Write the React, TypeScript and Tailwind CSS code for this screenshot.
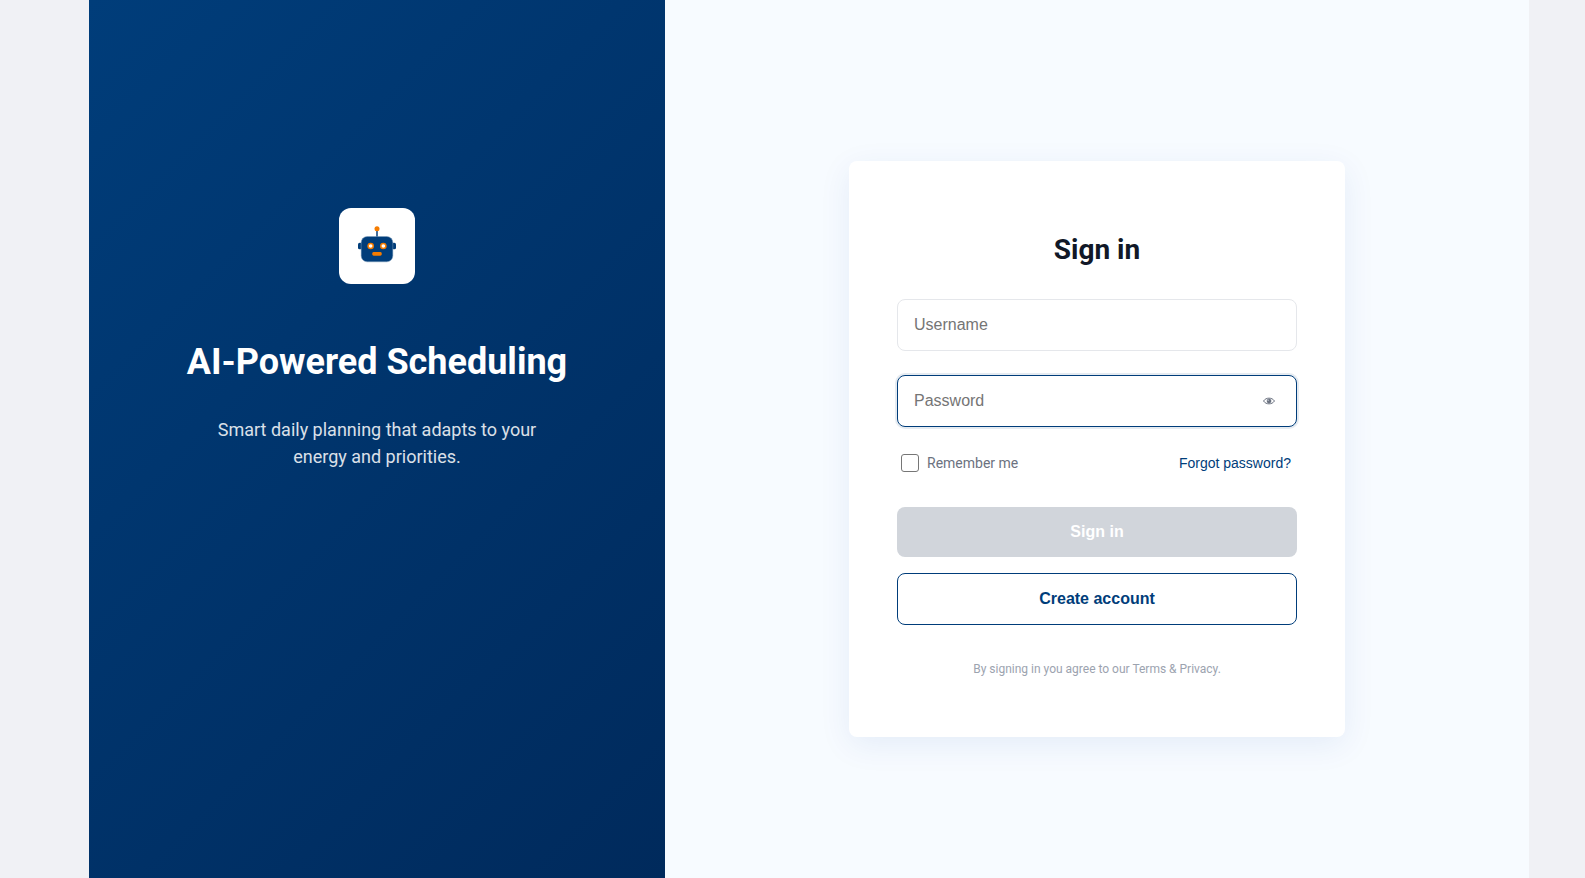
import React from "react";

function RobotIcon() {
  return (
    <svg viewBox="0 0 120 120" className="size-10" aria-hidden="true">
      <rect x="57.500" y="12" width="5" height="22" fill="#1f5288" />
      <circle cx="60" cy="8" r="7.5" fill="#f57c00" />
      <rect x="3" y="50" width="12" height="20" rx="5" fill="#003d7a" />
      <rect x="105" y="50" width="12" height="20" rx="5" fill="#003d7a" />
      <rect x="12.500" y="31.500" width="95" height="76" rx="18" fill="#003d7a" stroke="#7f9ebc" strokeWidth="1.500" />
      <circle cx="41" cy="60" r="10" fill="#f57c00" />
      <circle cx="79" cy="60" r="10" fill="#f57c00" />
      <circle cx="41" cy="60" r="5.5" fill="#fff" />
      <circle cx="79" cy="60" r="5.5" fill="#fff" />
      <rect x="46" y="78" width="28" height="11" rx="4" fill="#f57c00" />
    </svg>
  );
}

function EyeIcon() {
  return (
    <svg viewBox="0 0 36 24" className="h-2 w-3" fill="none" stroke="#6b7280" aria-hidden="true">
      <path d="M1.5 12C6 6 11 3.500 18 3.500S30 6 34.500 12C30 18 25 20.500 18 20.500S6 18 1.500 12Z" strokeWidth="3" />
      <circle cx="18" cy="12" r="7" fill="#6b7280" stroke="none" />
      <circle cx="15.500" cy="9.500" r="2" fill="#d1d5db" stroke="none" />
    </svg>
  );
}

const fieldClass =
  "block h-13 w-full rounded-lg border bg-white px-4 font-['Liberation_Sans',Arial,sans-serif] text-base text-[#111827] outline-none placeholder:text-[#757575]";

export default function App() {
  return (
    <div className="flex min-h-screen justify-center bg-[#f0f1f5] pl-[33px] font-[Roboto,sans-serif]">
      <main className="flex w-full max-w-[1440px]">
        <section className="flex w-2/5 flex-col items-center bg-linear-[135deg,#003d7a,#002a5c] px-8 pt-52 text-center text-white">
          <div className="flex size-19 items-center justify-center rounded-xl bg-white">
            <RobotIcon />
          </div>
          <h1 className="mt-14 text-4xl leading-11 font-bold">AI-Powered Scheduling</h1>
          <p className="mt-8 max-w-[360px] text-lg leading-[27px] opacity-85">
            Smart daily planning that adapts to your energy and priorities.
          </p>
        </section>

        <section className="flex w-3/5 items-center justify-center bg-[#f7fbff] pt-5">
          <form
            className="w-full max-w-[496px] rounded-lg bg-white px-12 pt-18 pb-15 shadow-[0_8px_32px_rgba(0,61,160,0.08)]"
            onSubmit={(e) => e.preventDefault()}
          >
            <h2 className="text-center text-[28px] leading-[34px] font-bold text-[#111827]">Sign in</h2>

            <input
              type="text"
              aria-label="Username"
              placeholder="Username"
              className={`${fieldClass} mt-8 border-[#e5e7eb]`}
            />

            <div className="relative mt-6">
              <input
                type="password"
                aria-label="Password"
                placeholder="Password"
                className={`${fieldClass} border-[#003d7a] pr-12 shadow-[0_0_0_2px_rgba(0,61,122,0.1)]`}
              />
              <button
                type="button"
                aria-label="Show password"
                className="absolute inset-y-0 right-4 flex w-6 items-center justify-center"
              >
                <EyeIcon />
              </button>
            </div>

            <div className="mt-6 flex h-6 items-center justify-between pr-1.5 pl-1 text-sm">
              <label className="flex items-center gap-2 text-[#6b7280]">
                <input
                  type="checkbox"
                  className="size-[18px] appearance-none rounded-[3px] border border-[#767676] bg-white checked:bg-[#003d7a]"
                />
                Remember me
              </label>
              <a href="#" className="font-['Liberation_Sans',Arial,sans-serif] text-[#003d7a]">
                Forgot password?
              </a>
            </div>

            <button
              type="submit"
              disabled
              className="mt-8 block h-[50px] w-full rounded-lg bg-[#d1d5db] font-['Liberation_Sans',Arial,sans-serif] text-base font-bold text-white"
            >
              Sign in
            </button>
            <button
              type="button"
              className="mt-4 block h-13 w-full rounded-lg border border-[#003d7a] bg-white font-['Liberation_Sans',Arial,sans-serif] text-base font-bold text-[#003d7a]"
            >
              Create account
            </button>

            <p className="mt-9 text-center text-xs leading-4 text-[#9ca3af]">
              By signing in you agree to our Terms &amp; Privacy.
            </p>
          </form>
        </section>
      </main>
    </div>
  );
}
